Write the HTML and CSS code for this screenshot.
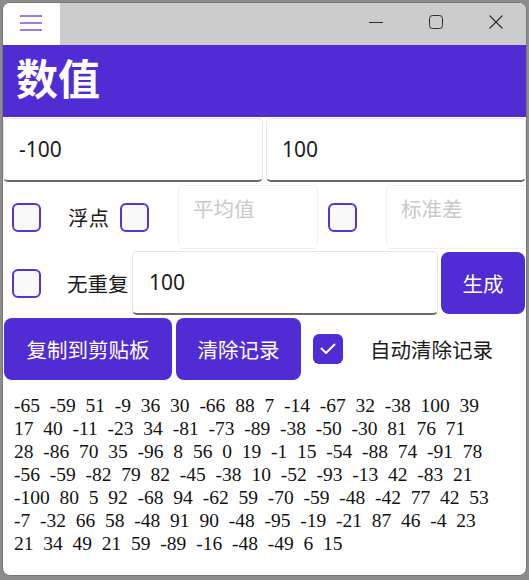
FILE: index.html
```html
<!DOCTYPE html>
<html lang="zh-CN">
<head>
<meta charset="utf-8">
<title>数值</title>
<link rel="stylesheet" href="styles.css">
</head>
<body>
<div class="window">
  <div class="titlebar">
    <div class="menu">
      <svg width="22" height="16" viewBox="0 0 22 16"><path d="M0 1H22M0 8H22M0 15H22" stroke="#7358dd" stroke-width="1.6" fill="none"/></svg>
    </div>
    <div class="spacer"></div>
    <div class="cap"><svg width="14" height="14" viewBox="0 0 14 14"><path d="M0 7.5H14" stroke="#2b2b2b" stroke-width="1"/></svg></div>
    <div class="cap"><svg width="14" height="14" viewBox="0 0 14 14"><rect x="0.5" y="0.5" width="13" height="13" rx="3" stroke="#2b2b2b" stroke-width="1" fill="none"/></svg></div>
    <div class="cap"><svg width="14" height="14" viewBox="0 0 14 14"><path d="M0.5 0.5L13.5 13.5M13.5 0.5L0.5 13.5" stroke="#2b2b2b" stroke-width="1.1" fill="none"/></svg></div>
  </div>
  <div class="header">数值</div>

  <div class="row row-range">
    <div class="entry entry-line">-100</div>
    <div class="entry entry-line">100</div>
  </div>

  <div class="row row-opts">
    <span class="cb cb-a"></span>
    <span class="lbl lbl-float">浮点</span>
    <span class="cb cb-b"></span>
    <div class="entry entry-ph ph-mean">平均值</div>
    <span class="cb cb-c"></span>
    <div class="entry entry-ph ph-std">标准差</div>
  </div>

  <div class="row row-count">
    <span class="cb cb-a"></span>
    <span class="lbl lbl-unique">无重复</span>
    <div class="entry entry-line entry-count">100</div>
    <div class="btn btn-gen">生成</div>
  </div>

  <div class="row row-actions">
    <div class="btn btn-copy">复制到剪贴板</div>
    <div class="btn btn-clear">清除记录</div>
    <span class="cb cb-checked">
      <svg width="30" height="30" viewBox="0 0 30 30"><path d="M8.5 14.5L13 19L21.5 10.5" stroke="#ffffff" stroke-width="2" fill="none" stroke-linecap="round" stroke-linejoin="round"/></svg>
    </span>
    <span class="lbl lbl-auto">自动清除记录</span>
  </div>

  <div class="output">
    <div class="line">-65 -59 51 -9 36 30 -66 88 7 -14 -67 32 -38 100 39</div>
    <div class="line">17 40 -11 -23 34 -81 -73 -89 -38 -50 -30 81 76 71</div>
    <div class="line">28 -86 70 35 -96 8 56 0 19 -1 15 -54 -88 74 -91 78</div>
    <div class="line">-56 -59 -82 79 82 -45 -38 10 -52 -93 -13 42 -83 21</div>
    <div class="line">-100 80 5 92 -68 94 -62 59 -70 -59 -48 -42 77 42 53</div>
    <div class="line">-7 -32 66 58 -48 91 90 -48 -95 -19 -21 87 46 -4 23</div>
    <div class="line">21 34 49 21 59 -89 -16 -48 -49 6 15</div>
  </div>
</div>
</body>
</html>
```

FILE: styles.css
```css
* { box-sizing: border-box; }

html, body {
  margin: 0;
  padding: 0;
  background: #8c8c8c;
}

body {
  width: 529px;
  height: 580px;
  overflow: hidden;
  font-family: "Noto Sans", "Noto Sans CJK SC", sans-serif;
  color: #1b1b1b;
}

.window {
  margin: 2px 0 0 2px;
  width: 525px;
  height: 574px;
  border: 1px solid #767676;
  border-radius: 8px;
  background: #ffffff;
  overflow: hidden;
  display: flex;
  flex-direction: column;
}

/* title bar */
.titlebar {
  height: 42px;
  flex: none;
  display: flex;
  background: #cccccc;
}

.menu {
  width: 57px;
  background: #ffffff;
  padding: 12px 0 0 17px;
}

.menu svg { display: block; }

.spacer { flex: 1; }

.cap {
  width: 60px;
  display: flex;
  justify-content: center;
  padding-top: 12px;
}

.cap svg { display: block; }

/* header */
.header {
  height: 72px;
  flex: none;
  background: #512bd4;
  color: #ffffff;
  font-family: "Noto Sans CJK SC", sans-serif;
  font-weight: 700;
  font-size: 42px;
  line-height: 60px;
  padding: 2px 0 0 13px;
}

/* rows */
.row {
  flex: none;
  height: 64px;
  display: flex;
  align-items: center;
}

.row-range {
  margin-top: 1px;
  display: grid;
  grid-template-columns: 260px 260px;
  column-gap: 3px;
}

.row-opts { margin-top: 3px; }
.row-count { margin-top: 2px; }
.row-actions { margin-top: 2px; }

/* entries */
.entry {
  height: 64px;
  background: #ffffff;
  border: 1px solid #e6e6e6;
  border-radius: 5px;
  font-size: 21px;
  padding-left: 15px;
  white-space: nowrap;
  overflow: hidden;
}

.entry-line {
  border-bottom: 2px solid #6a6a6a;
  display: flex;
  align-items: center;
  padding-bottom: 2px;
}

.entry-ph {
  border: 1.5px solid #efefef;
  color: #c9c9c9;
  font-family: "Noto Sans CJK SC", sans-serif;
  font-size: 20.5px;
  line-height: 26px;
  padding-top: 9px;
  padding-left: 14px;
  flex: none;
}

.ph-mean { width: 140px; margin-left: 29px; }
.ph-std { width: 150px; margin-left: 29px; }

.entry-count {
  width: 306px;
  flex: none;
  padding-left: 16px;
}

/* checkboxes */
.cb {
  flex: none;
  width: 29px;
  height: 29px;
  border: 2px solid #5633d6;
  border-radius: 6px;
  background: #f8f8f8;
}

.cb-a { margin-left: 9px; }
.cb-b { margin-left: 10px; }
.cb-c { margin-left: 10px; }

.cb-checked {
  width: 30px;
  height: 30px;
  margin-left: 12px;
  border: none;
  background: #512bd4;
}

.cb-checked svg { display: block; }

/* labels */
.lbl {
  flex: none;
  font-family: "Noto Sans CJK SC", sans-serif;
  font-size: 20.5px;
  color: #1b1b1b;
  white-space: nowrap;
  overflow: hidden;
}

.lbl-float { margin-left: 27px; width: 42px; }
.lbl-unique { margin-left: 26px; width: 65px; }
.lbl-auto { margin-left: 27px; }

/* buttons */
.btn {
  flex: none;
  height: 62px;
  background: #512bd4;
  border-radius: 8px;
  color: #ffffff;
  font-family: "Noto Sans CJK SC", sans-serif;
  font-size: 20.5px;
  display: flex;
  align-items: center;
  justify-content: center;
}

.btn-gen { width: 84px; margin-left: 3px; }
.btn-copy { width: 168px; margin-left: 1px; }
.btn-clear { width: 125px; margin-left: 4px; }

/* output */
.output {
  padding: 13px 0 0 11px;
  font-family: "Liberation Serif", serif;
  font-size: 19.5px;
  line-height: 23.07px;
  word-spacing: 4.9px;
  color: #111111;
}

.line { white-space: nowrap; }
```
